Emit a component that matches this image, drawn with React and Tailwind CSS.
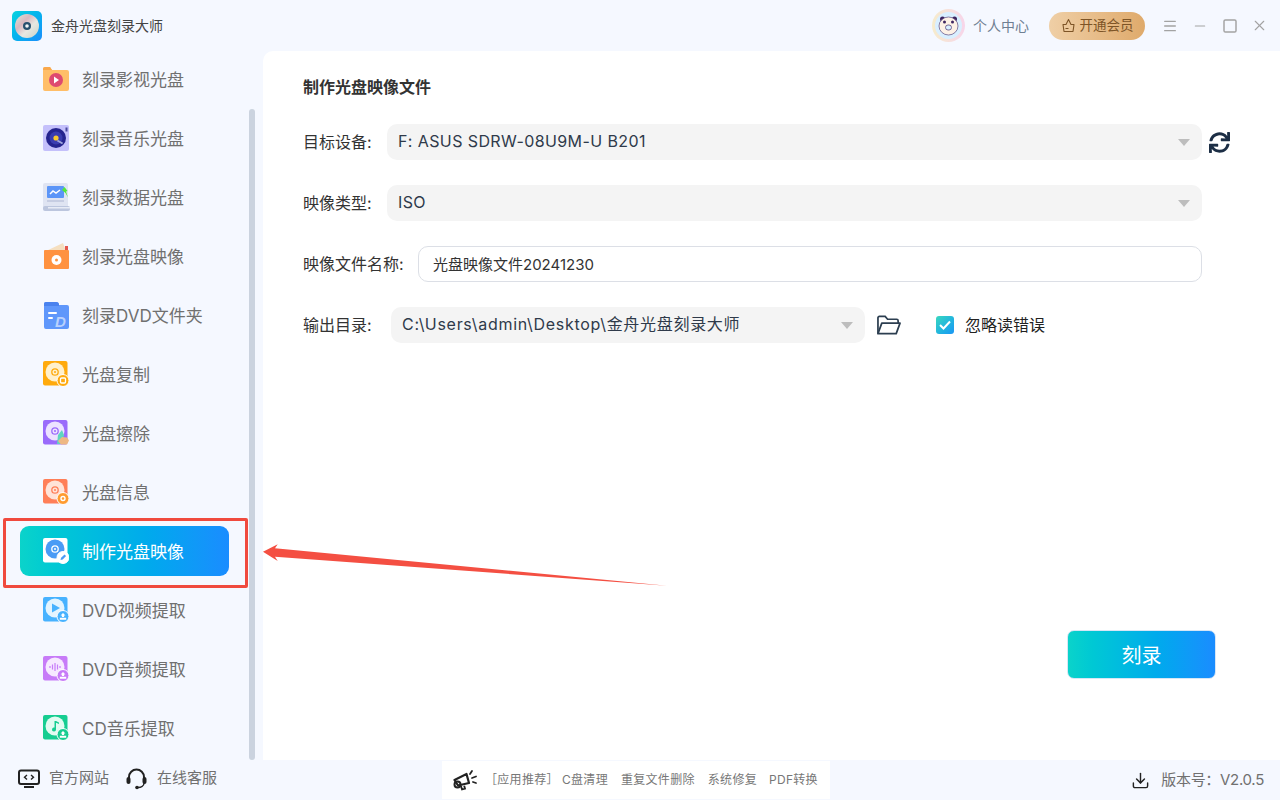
import { Download, Menu, Minus, Square, X } from "lucide-react";
import { FaSync } from "react-icons/fa";

const font = { fontFamily: 'Inter, "Noto Sans CJK SC", sans-serif' };

function Disc({ bg, ring, hub, badge, glyph, children }) {
    return (
        <svg width="26" height="26" viewBox="0 0 26 26">
            <rect x="0" y="0" width="24.500" height="24.500" rx="2" fill={bg} />
            <circle cx="12" cy="11" r="9.500" fill={ring} />
            <circle cx="12" cy="11" r="3.200" fill="none" stroke={hub} strokeWidth="1.300" />
            <circle cx="12" cy="11" r="1" fill={hub} />
            {children}
            {badge && (
                <g>
                    <circle cx="20" cy="19.500" r="6" fill={badge} stroke="#fff" strokeWidth="1" />
                    {glyph === "gear" && <circle cx="20" cy="19.500" r="2" fill="none" stroke="#fff" strokeWidth="1.400" />}
                    {glyph === "copy" && <rect x="17.500" y="17" width="5" height="5" rx="1" fill="none" stroke="#fff" strokeWidth="1.300" />}
                    {glyph === "up" && <path d="M20 16l2.500 2.500h-1.400v1.600h-2.200v-1.600h-1.400zM16.800 20.700h6.400v2h-6.400z" fill="#fff" />}
                    {glyph === "pen" && <path d="M17.500 22l.6-2.200 3.400-3.400 1.600 1.600-3.400 3.400z" fill="#4a9bf5" />}
                </g>
            )}
        </svg>
    );
}

const icons = {
    video: (
        <svg width="26" height="26" viewBox="0 0 26 26">
            <path d="M0 3a2 2 0 0 1 2-2h5l2 3h15a2 2 0 0 1 2 2v17a2 2 0 0 1-2 2H2a2 2 0 0 1-2-2z" fill="#ffbe68" />
            <path d="M0 3a2 2 0 0 1 2-2h5l2 3H0z" fill="#f9a84c" />
            <circle cx="13" cy="14" r="7" fill="#de4a70" />
            <path d="M11 10.500l5 3.500-5 3.500z" fill="#fff" />
        </svg>
    ),
    music: (
        <svg width="26" height="26" viewBox="0 0 26 26">
            <rect width="26" height="26" rx="2" fill="#c4c0fb" />
            <circle cx="13" cy="13" r="10" fill="#25248f" />
            <circle cx="13" cy="13" r="6.500" fill="#3a3cb0" />
            <circle cx="13" cy="13" r="2.600" fill="#fbc92d" />
            <rect x="14" y="16" width="6" height="2" fill="#9fa4dc" transform="rotate(30 17 17)" />
            <rect x="22.500" y="2.500" width="2" height="4" fill="#4b4aa0" />
        </svg>
    ),
    data: (
        <svg width="27" height="28" viewBox="0 0 27 28">
            <rect width="25" height="27" y="0" rx="2" fill="#dfe4f2" />
            <rect x="4" y="3" width="17" height="12" rx="1" fill="#5b95f8" />
            <path d="M7 11l3-3 3 2 4-3" fill="none" stroke="#fff" strokeWidth="1.500" />
            <path d="M19 7l2.500-3 3 4-1.500.4 2 6-2.500-4.500z" fill="#53e83b" />
            <rect x="4" y="17" width="17" height="2" fill="#c6cde2" />
            <rect x="0" y="23" width="27" height="5" rx="2" fill="#bcc6de" />
            <rect x="5" y="24" width="22" height="1.500" fill="#e8ecf6" />
        </svg>
    ),
    image: (
        <svg width="26" height="26" viewBox="0 0 26 26">
            <path d="M3 8L20 0l3 8z" fill="#f5dfc0" />
            <path d="M22 3l3 0 0 5h-3z" fill="#e4574c" />
            <rect x="1" y="7" width="25" height="19" rx="1" fill="#ff9240" />
            <circle cx="13.500" cy="17" r="5" fill="#fff" />
            <circle cx="13.500" cy="17" r="1.500" fill="#ff9240" />
        </svg>
    ),
    dvd: (
        <svg width="26" height="29" viewBox="0 0 26 29">
            <path d="M1 3a2 2 0 0 1 2-2h10a3 3 0 0 1 3 3h8a2 2 0 0 1 2 2v20a2 2 0 0 1-2 2H3a2 2 0 0 1-2-2z" fill="#5f97fb" />
            <path d="M1 3a2 2 0 0 1 2-2h10a3 3 0 0 1 3 3v1H1z" fill="#4a82ee" />
            <rect x="5" y="11" width="9" height="2" rx="1" fill="#fff" />
            <rect x="5" y="16" width="5" height="2" rx="1" fill="#fff" />
            <text x="12" y="26" fontSize="15" fontWeight="700" fontStyle="italic" fill="#b9d1fd" fontFamily="Liberation Sans, sans-serif">D</text>
        </svg>
    ),
    copy: <Disc bg="#ffaa0d" ring="#fff0cc" hub="#ffaa0d" badge="#ffaa0d" glyph="copy" />,
    erase: (
        <Disc bg="#9a6bfb" ring="#ece2ff" hub="#9a6bfb">
            <path d="M14 24l1-9 4-5 2 5-2 9z" fill="#5fd6c0" />
            <path d="M15 21l4-4 5 .5 2 3-2 4h-6z" fill="#eeb883" />
        </Disc>
    ),
    info: <Disc bg="#ff7f58" ring="#ffe3d8" hub="#ff7f58" badge="#ff9b2f" glyph="gear" />,
    make: <Disc bg="#ffffff" ring="#4a9bf5" hub="#ffffff" badge="#ffffff" glyph="pen" />,
    dvdVideo: (
        <Disc bg="#47b2ff" ring="#e3f4ff" hub="#e3f4ff" badge="#47b2ff" glyph="up">
            <path d="M9 6.500l8 4.500-8 4.500z" fill="#47b2ff" />
        </Disc>
    ),
    dvdAudio: (
        <Disc bg="#c77bf8" ring="#f6e9ff" hub="#f6e9ff" badge="#c77bf8" glyph="up">
            <path d="M7 10v2M9.500 8.500v5M12 7v8M14.500 8.500v5M17 10v2" stroke="#c77bf8" strokeWidth="1.200" />
        </Disc>
    ),
    cd: (
        <Disc bg="#16cd91" ring="#e2fbf1" hub="#e2fbf1" badge="#16cd91" glyph="up">
            <path d="M13 6V14.500a2 2 0 1 1-1.500-1.900V6zM13 6l3 1.500V9l-3-1.300z" fill="#16cd91" />
        </Disc>
    ),
};

const menu = [
    ["video", "刻录影视光盘"],
    ["music", "刻录音乐光盘"],
    ["data", "刻录数据光盘"],
    ["image", "刻录光盘映像"],
    ["dvd", "刻录DVD文件夹"],
    ["copy", "光盘复制"],
    ["erase", "光盘擦除"],
    ["info", "光盘信息"],
    ["make", "制作光盘映像"],
    ["dvdVideo", "DVD视频提取"],
    ["dvdAudio", "DVD音频提取"],
    ["cd", "CD音乐提取"],
];

function Logo() {
    return (
        <div className="w-[30px] h-[30px] rounded-[5px] bg-gradient-to-br from-[#0bd3de] to-[#1b8dfb] flex items-center justify-center">
            <svg width="26" height="26" viewBox="0 0 26 26">
                <defs>
                    <linearGradient id="cdg" x1="0" y1="0" x2="1" y2="1">
                        <stop offset="0" stopColor="#d9e8d8" />
                        <stop offset="0.35" stopColor="#d8b8c0" />
                        <stop offset="0.6" stopColor="#e8e8e2" />
                        <stop offset="1" stopColor="#c9d2c8" />
                    </linearGradient>
                </defs>
                <circle cx="13" cy="13" r="12" fill="url(#cdg)" />
                <circle cx="13" cy="13" r="4" fill="#26506e" />
                <circle cx="13" cy="13" r="1.800" fill="#f2f6f8" />
            </svg>
        </div>
    );
}

function Avatar() {
    return (
        <div className="w-[33px] h-[33px] rounded-full bg-gradient-to-r from-[#f6eccb] to-[#f7d5ea] flex items-center justify-center">
            <svg width="27" height="27" viewBox="0 0 27 27">
                <circle cx="13.500" cy="13.500" r="13.500" fill="#d9efff" />
                <circle cx="7.500" cy="7" r="2.500" fill="#3e2560" />
                <circle cx="19.500" cy="7" r="2.500" fill="#3e2560" />
                <ellipse cx="13.500" cy="14" rx="9.500" ry="9" fill="#fdf1e6" stroke="#5c4a80" strokeWidth="0.700" />
                <circle cx="9.500" cy="10" r="1.500" fill="#3e2560" />
                <circle cx="17.500" cy="10" r="1.500" fill="#3e2560" />
                <rect x="10.500" y="13" width="6" height="5" rx="2.500" fill="#d9efff" stroke="#5c4a80" strokeWidth="0.800" />
            </svg>
        </div>
    );
}

function SelectBox({ value, className, textClass = "tracking-[0.4px]" }) {
    return (
        <div className={`h-9 rounded-[10px] bg-[#f4f4f4] flex items-center justify-between pl-[11px] pr-3 ${className}`}>
            <span className={`text-[16px] text-[#2f3a4a] relative -top-px ${textClass}`}>{value}</span>
            <span className="w-0 h-0 border-x-[6px] border-x-transparent border-t-[7px] border-t-[#bdbdbd]" />
        </div>
    );
}

function Row({ label, labelWidth, children }) {
    return (
        <div className="flex items-center h-9">
            <div className="text-[16px] text-[#333] shrink-0" style={{ width: labelWidth }}>{label}</div>
            {children}
        </div>
    );
}

export default function App() {
    return (
        <div className="relative w-[1280px] h-[800px] overflow-hidden bg-[#f5f8ff] flex flex-col" style={font}>
            <div className="h-[51px] shrink-0 flex items-center pl-3 pr-3">
                <Logo />
                <span className="ml-[9px] text-[14px] text-[#444]">金舟光盘刻录大师</span>
                <div className="ml-auto flex items-center">
                    <Avatar />
                    <span className="ml-2 text-[14px] text-[#6f7f92]">个人中心</span>
                    <div className="ml-5 w-24 h-7 rounded-full bg-gradient-to-r from-[#efcfa6] to-[#dfaa6b] flex items-center justify-center gap-1 text-[13.500px] text-[#7d5426]">
                        <svg width="15" height="15" viewBox="0 0 15 15">
                            <path d="M2 6.500h3L7.500 1.500 10 6.500h3l-1 7H3z" fill="none" stroke="#7d5426" strokeWidth="1.100" strokeLinejoin="round" />
                            <path d="M4.500 10.500h3" stroke="#7d5426" strokeWidth="1" />
                        </svg>
                        开通会员
                    </div>
                    <Menu size={16} strokeWidth={2} className="ml-[17px] text-[#a3a3a3]" />
                    <Minus size={16} strokeWidth={1.700} className="ml-[14px] text-[#a3a3a3]" />
                    <Square size={16} strokeWidth={2.200} className="ml-[14px] text-[#a3a3a3]" />
                    <X size={17} strokeWidth={1.600} className="ml-[13px] text-[#a3a3a3]" />
                </div>
            </div>

            <div className="flex flex-1 min-h-0">
                <div className="w-[263px] shrink-0 flex">
                    <div className="w-[249px] shrink-0 pl-5 pr-5 pt-[3px] flex flex-col gap-[9px]">
                        {menu.map(([key, label]) => {
                            const active = key === "make";
                            return (
                                <div
                                    key={key}
                                    className={`h-[50px] shrink-0 rounded-[9px] flex items-center pl-[23px] ${active ? "bg-gradient-to-r from-[#0bd3ca] to-[#1a8cff] text-white" : "text-[#707070]"}`}
                                >
                                    <div className="w-[39px] shrink-0 flex items-center">{icons[key]}</div>
                                    <span className="text-[17px] whitespace-nowrap relative top-[2px]">{label}</span>
                                </div>
                            );
                        })}
                    </div>
                    <div className="w-1.5 h-[651px] mt-[58px] rounded-full bg-[#cbd3df]" />
                </div>

                <div className="flex-1 min-w-0 bg-white rounded-tl-[10px] pl-10 pr-[64px] flex flex-col pb-[81px]">
                    <div className="mt-[25px] text-[16px] font-bold text-[#333] leading-[22px]">制作光盘映像文件</div>
                    <div className="mt-[26px] flex flex-col gap-[25px]">
                        <Row label="目标设备:" labelWidth={84}>
                            <SelectBox value="F: ASUS SDRW-08U9M-U B201" className="w-[815px] shrink-0" />
                            <FaSync size={21} className="ml-[7px] text-[#1c2e45] shrink-0" />
                        </Row>
                        <Row label="映像类型:" labelWidth={84}>
                            <SelectBox value="ISO" className="w-[815px] shrink-0" />
                        </Row>
                        <Row label="映像文件名称:" labelWidth={115}>
                            <div className="w-[784px] h-9 rounded-[10px] border border-[#dcdfe6] flex items-center pl-[14px] text-[15px] text-[#333] shrink-0">
                                <span className="relative top-px">光盘映像文件20241230</span>
                            </div>
                        </Row>
                        <Row label="输出目录:" labelWidth={88}>
                            <SelectBox value="C:\Users\admin\Desktop\金舟光盘刻录大师" className="w-[474px] shrink-0 pl-3" textClass="tracking-[0.7px]" />
                            <svg className="ml-3" width="24" height="21" viewBox="0 0 25 21">
                                <path d="M1 19V2.500A1.500 1.500 0 0 1 2.500 1h6l2.500 3h9.500A1.500 1.500 0 0 1 22 5.500V8" fill="none" stroke="#2c3e50" strokeWidth="1.800" />
                                <path d="M1 19l4-11h19l-4 11z" fill="none" stroke="#2c3e50" strokeWidth="1.800" strokeLinejoin="round" />
                            </svg>
                            <div className="ml-[35px] w-[18px] h-[18px] rounded-[3px] bg-gradient-to-br from-[#3bd7bd] to-[#1d95f5] flex items-center justify-center">
                                <svg width="12" height="10" viewBox="0 0 12 10"><path d="M1 5l3.500 3.500L11 1.500" fill="none" stroke="#fff" strokeWidth="2" /></svg>
                            </div>
                            <span className="ml-[11px] text-[16px] text-[#222]">忽略读错误</span>
                        </Row>
                    </div>
                    <div className="mt-auto self-end w-[149px] h-[49px] rounded-[7px] border border-[#d7e6f5] bg-gradient-to-r from-[#0bd3ca] to-[#1a8cff] flex items-center justify-center text-[20px] text-white">
                        <span className="relative top-px">刻录</span>
                    </div>
                </div>
            </div>

            <div className="h-10 shrink-0 flex items-center text-[#707070]">
                <div className="w-[442px] shrink-0 flex items-center pl-[18px] pb-[3px]">
                    <svg width="22" height="20" viewBox="0 0 22 20">
                        <rect x="1" y="1.500" width="20" height="13.500" rx="2" fill="none" stroke="#222" strokeWidth="2" />
                        <path d="M9 6L6.500 8.200 9 10.500M13 6l2.500 2.200L13 10.500" fill="none" stroke="#222" strokeWidth="1.400" />
                        <rect x="6" y="17" width="10" height="2" fill="#222" />
                    </svg>
                    <span className="ml-[9px] text-[15px]">官方网站</span>
                    <svg className="ml-[17px]" width="21" height="22" viewBox="0 0 21 22">
                        <path d="M3 11V9a7.500 7.500 0 0 1 15 0v2" fill="none" stroke="#222" strokeWidth="2" />
                        <rect x="0.500" y="9" width="4" height="7" rx="2" fill="#222" />
                        <rect x="16.500" y="9" width="4" height="7" rx="2" fill="#222" />
                        <path d="M18 15c0 3-3 4.500-6 4.500" fill="none" stroke="#222" strokeWidth="1.500" />
                        <circle cx="11" cy="19.500" r="1.800" fill="#222" />
                    </svg>
                    <span className="ml-[10px] text-[15px]">在线客服</span>
                </div>
                <div className="w-[388px] shrink-0 h-[38px] bg-white flex items-center pl-[11px] text-[12px] text-[#777] tracking-[0.3px]">
                    <svg width="26" height="22" viewBox="0 0 26 22">
                        <path d="M1.500 11l12-6 2.500 9-11 2.500z" fill="none" stroke="#222" strokeWidth="2.200" strokeLinejoin="round" />
                        <circle cx="4.500" cy="15.500" r="3" fill="none" stroke="#222" strokeWidth="2" />
                        <path d="M8 17l1 3.500 3-.8-.8-3" fill="none" stroke="#222" strokeWidth="1.800" />
                        <path d="M17 5l2-3M19 9l4-1.500M20 13l3 1" stroke="#222" strokeWidth="1.800" strokeLinecap="round" />
                    </svg>
                    <span className="ml-[6px] w-[77px] shrink-0">［应用推荐］</span>
                    <span className="shrink-0">C盘清理</span>
                    <span className="ml-[13px] shrink-0">重复文件删除</span>
                    <span className="ml-[13px] shrink-0">系统修复</span>
                    <span className="ml-[12px] shrink-0">PDF转换</span>
                </div>
                <div className="flex-1 flex items-center justify-end pr-4 text-[15px] tracking-[-0.3px]">
                    <Download size={19} strokeWidth={1.800} className="text-[#222]" />
                    <span className="ml-[11px]">版本号：V2.0.5</span>
                </div>
            </div>

            <div className="absolute left-[3px] top-[518px] w-[245px] h-[70px] border-[3px] border-[#f04a3e] rounded-[2px]" />
            <svg className="absolute left-[255px] top-[535px]" width="420" height="60" viewBox="0 0 420 60">
                <path d="M8 16.700L22.700 9.300 20 13.300 412 50.700 20 21.700 22.700 26z" fill="#f44f42" />
            </svg>
        </div>
    );
}
